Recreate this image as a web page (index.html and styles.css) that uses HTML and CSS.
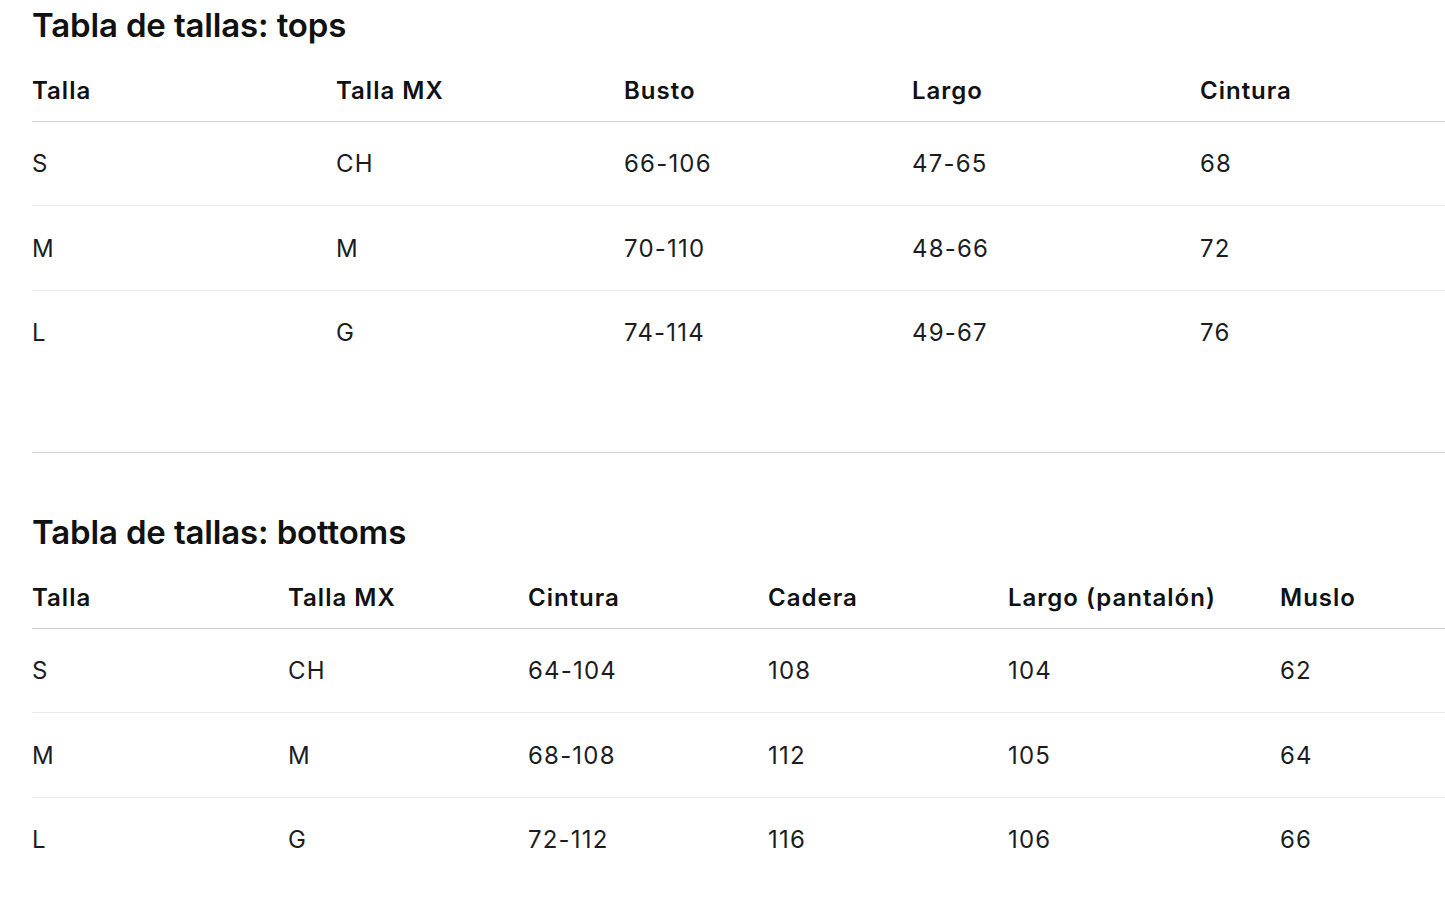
FILE: index.html
```html
<!DOCTYPE html>
<html lang="es">
<head>
<meta charset="utf-8">
<title>Tabla de tallas</title>
<link rel="stylesheet" href="styles.css">
</head>
<body>
<main class="page">
  <section class="chart">
    <h2 class="chart-title">Tabla de tallas: tops</h2>
    <table class="size-table">
      <colgroup>
        <col class="w304"><col class="w288"><col class="w288"><col class="w288"><col>
      </colgroup>
      <thead>
        <tr><th>Talla</th><th>Talla MX</th><th>Busto</th><th>Largo</th><th>Cintura</th></tr>
      </thead>
      <tbody>
        <tr><td>S</td><td>CH</td><td>66-106</td><td>47-65</td><td>68</td></tr>
        <tr><td>M</td><td>M</td><td>70-110</td><td>48-66</td><td>72</td></tr>
        <tr><td>L</td><td>G</td><td>74-114</td><td>49-67</td><td>76</td></tr>
      </tbody>
    </table>
  </section>
  <hr class="divider">
  <section class="chart">
    <h2 class="chart-title">Tabla de tallas: bottoms</h2>
    <table class="size-table">
      <colgroup>
        <col class="w256"><col class="w240"><col class="w240"><col class="w240"><col class="w272"><col>
      </colgroup>
      <thead>
        <tr><th>Talla</th><th>Talla MX</th><th>Cintura</th><th>Cadera</th><th>Largo (pantalón)</th><th>Muslo</th></tr>
      </thead>
      <tbody>
        <tr><td>S</td><td>CH</td><td>64-104</td><td>108</td><td>104</td><td>62</td></tr>
        <tr><td>M</td><td>M</td><td>68-108</td><td>112</td><td>105</td><td>64</td></tr>
        <tr><td>L</td><td>G</td><td>72-112</td><td>116</td><td>106</td><td>66</td></tr>
      </tbody>
    </table>
  </section>
</main>
</body>
</html>
```

FILE: styles.css
```css
html, body {
  margin: 0;
  padding: 0;
  background: #ffffff;
}

body {
  font-family: Inter, "Noto Sans", "Liberation Sans", sans-serif;
  color: #1d1d1f;
  overflow: hidden;
}

.page {
  padding: 5px 0 0 32px;
}

.chart-title {
  margin: 0 0 31px;
  font-size: 33px;
  line-height: 40px;
  font-weight: 600;
  letter-spacing: -0.15px;
  color: #111111;
}

.size-table {
  width: 100%;
  border-collapse: collapse;
  table-layout: fixed;
  font-size: 24px;
  line-height: 30px;
}

.w304 { width: 304px; }
.w288 { width: 288px; }
.w256 { width: 256px; }
.w240 { width: 240px; }
.w272 { width: 272px; }

.size-table th {
  text-align: left;
  font-weight: 600;
  letter-spacing: 1px;
  padding: 0 0 14.5px;
  border-bottom: 1px solid #d2d2d2;
  color: #111111;
}

.size-table td {
  padding: 27.5px 0 26px;
  font-weight: 400;
  letter-spacing: 1.2px;
  border-bottom: 1px solid #ebebeb;
}

.size-table tbody tr:last-child td {
  border-bottom: none;
}

.divider {
  margin: 78px 0 0;
  border: 0;
  border-top: 1px solid #d4d4d4;
  height: 0;
}

.divider + .chart .chart-title {
  margin-top: 59px;
}
```
